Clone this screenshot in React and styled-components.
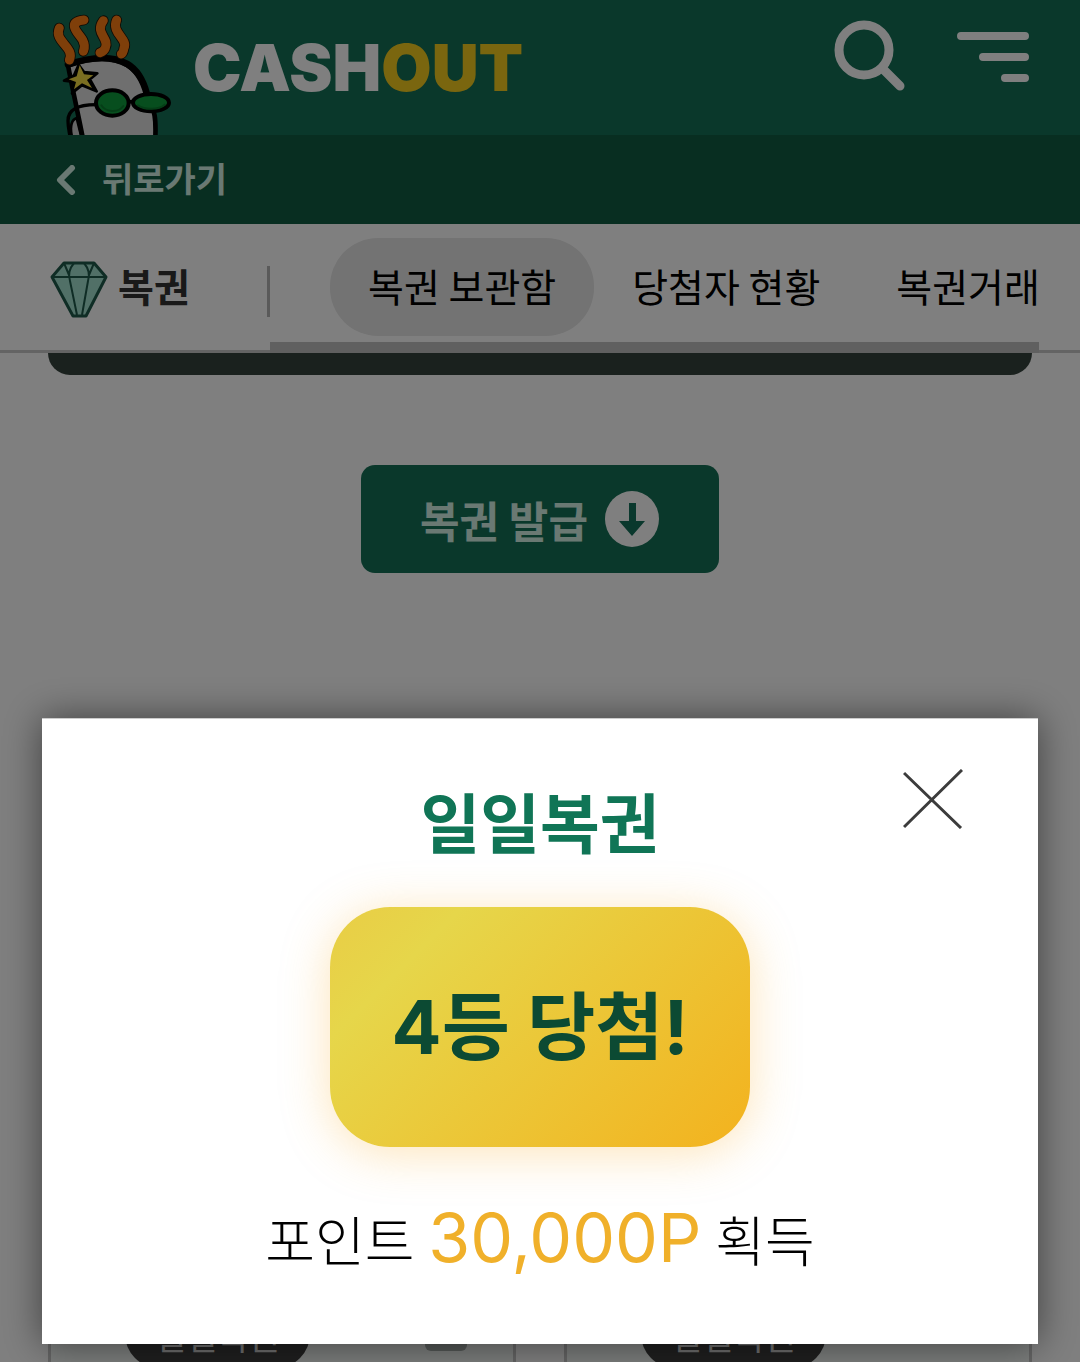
import React, { useState } from 'react';
import styled, { createGlobalStyle } from 'styled-components';

// Global Styles
const GlobalStyle = createGlobalStyle`
  :root {
    --green: #147056;
    --green-dark: #105c42;
    --mint: #d4f2e6;
    --gold: #f0b02a;
    --line: #c8c8c8;
  }
  * { box-sizing: border-box; }
  body {
    margin: 0;
    background: #fff;
    color: #000;
    font-family: "Noto Sans CJK KR", "Noto Sans", sans-serif;
  }
  button {
    font-family: inherit;
    border: 0;
    padding: 0;
    background: none;
    cursor: pointer;
  }
  a {
    color: inherit;
    text-decoration: none;
  }
  svg {
    display: block;
    flex-shrink: 0;
  }
`;

const Page = styled.div`
  height: 100vh;
  overflow: hidden;
`;

const Header = styled.header`
  display: flex;
  align-items: center;
  justify-content: space-between;
  height: 135px;
  padding: 0 51px 0 50px;
  background: var(--green);
`;

const HomeLink = styled.a`
  display: flex;
  align-items: center;
  gap: 21px;
  height: 100%;

  svg {
    align-self: flex-end;
  }
`;

const LogoText = styled.span`
  font-family: Inter, sans-serif;
  font-size: 65px;
  font-weight: 900;
  line-height: 64px;
  color: #fff;
`;

const LogoAccent = styled.span`
  color: #f5cc1e;
`;

const HeaderActions = styled.div`
  display: flex;
  align-items: center;
  gap: 52px;
  padding-bottom: 24px;
`;

const BackBar = styled.div`
  display: flex;
  align-items: center;
  height: 89px;
  padding: 0 56px;
  background: var(--green-dark);
`;

const BackLink = styled.a`
  display: flex;
  align-items: center;
  gap: 26px;
  font-size: 34px;
  font-weight: 700;
  line-height: 44px;
  color: var(--mint);
`;

const BarLabel = styled.span`
  padding-bottom: 4px;
`;

const SubNav = styled.nav`
  display: flex;
  align-items: stretch;
  height: 129px;
  padding-right: 41px;
  border-bottom: 3px solid var(--line);
`;

const Category = styled.div`
  display: flex;
  align-items: center;
  gap: 10px;
  width: 267px;
  flex-shrink: 0;
  padding-left: 50px;
  font-size: 39px;
  font-weight: 700;
  line-height: 52px;
  color: #333;
`;

const Divider = styled.div`
  align-self: center;
  width: 3px;
  height: 51px;
  margin-top: 8px;
  background: #b4b4b4;
`;

const TabArea = styled.div`
  flex: 1;
  min-width: 0;
  display: flex;
  flex-direction: column;
  justify-content: space-between;
  margin-bottom: -3px;
  padding-top: 14px;
`;

const Tabs = styled.div`
  display: flex;
  padding-left: 60px;
`;

const Tab = styled.a`
  flex-shrink: 0;
  padding: 0 38px 4px;
  border-radius: 48px;
  background: ${props => props.$active ? '#e6e6e6' : 'transparent'};
  font-size: 39px;
  line-height: 94px;
  white-space: nowrap;

  &:last-child {
    padding-right: 0;
  }
`;

const ScrollBar = styled.div`
  height: 11px;
  background: #c0c0c0;
`;

const Content = styled.main`
  display: flex;
  flex-direction: column;
  align-items: center;
  padding: 0 48px;
`;

const BannerEnd = styled.div`
  width: 100%;
  height: 22px;
  border-radius: 0 0 22px 22px;
  background: #34423c;
`;

const IssueButton = styled.button`
  display: flex;
  align-items: center;
  gap: 17px;
  height: 108px;
  margin: 90px 0;
  padding: 0 59px;
  border-radius: 14px;
  background: var(--green);
  color: var(--mint);
  font-size: 43px;
  font-weight: 700;
  line-height: 60px;
`;

const TicketGrid = styled.div`
  display: grid;
  grid-template-columns: 1fr 1fr;
  gap: 48px;
  width: 100%;
  margin-top: 580px;
`;

const TicketCard = styled.article`
  display: flex;
  align-items: flex-start;
  justify-content: space-between;
  height: 420px;
  padding: 54px 46px 0 74px;
  border: 3px solid var(--line);
  border-radius: 24px;
  background: #f6faf8;
`;

const TicketLabel = styled.span`
  padding: 4px 30px 0;
  border-radius: 36px;
  background: #3e3e3e;
  color: #d8d8d8;
  font-size: 34px;
  line-height: 64px;
`;

const TicketMark = styled.span`
  width: 42px;
  height: 51px;
  border-radius: 6px;
  background: #a8aeab;
`;

const Overlay = styled.div`
  position: fixed;
  inset: 0;
  display: flex;
  align-items: flex-end;
  padding: 0 42px 18px;
  background: rgba(0, 0, 0, 0.5);
`;

const Dialog = styled.section`
  position: relative;
  display: flex;
  flex-direction: column;
  align-items: center;
  width: 100%;
  padding: 60px 0 55px;
  border-top: 1px solid #ccc;
  background: #fff;
  box-shadow: 0 0 36px rgba(0, 0, 0, 0.5);
`;

const CloseButton = styled.button`
  position: absolute;
  top: 50px;
  right: 75px;
`;

const DialogTitle = styled.h2`
  margin: 0;
  font-size: 65px;
  font-weight: 600;
  line-height: 82px;
  color: #107556;
`;

const ResultBadge = styled.div`
  min-width: 420px;
  margin-top: 46px;
  padding: 66px 54px;
  border-radius: 60px;
  background: linear-gradient(135deg, #e9cd45 0%, #e6d64a 20%, #f3b21e 100%);
  box-shadow: 0 6px 48px rgba(250, 176, 50, 0.34);
  color: #0c4a33;
  font-family: Inter, "Noto Sans CJK KR", sans-serif;
  font-size: 74px;
  font-weight: 700;
  line-height: 108px;
  text-align: center;
  white-space: nowrap;
`;

const PointLine = styled.p`
  margin: 42px 0 0;
  font-size: 54px;
  font-weight: 300;
  line-height: 100px;
`;

const PointValue = styled.strong`
  margin: 0 2px;
  font-family: Inter, sans-serif;
  font-size: 68px;
  font-weight: 400;
  line-height: 80px;
  color: var(--gold);
`;

const Mascot = () => (
  <svg width="122" height="122" viewBox="30 39 366 366" fill="none" strokeLinecap="round" strokeLinejoin="round">
    <path d="M96 410C88 378 96 358 110 354L124 410Z" fill="#ccc" stroke="#000" strokeWidth="8" />
    <path d="M128 412C114 340 98 270 84 196C160 170 220 172 262 196C302 222 316 262 322 290C346 330 348 360 346 412Z" fill="#dedede" stroke="#000" strokeWidth="14" />
    <path d="M84 194C160 168 220 168 262 192C296 212 312 250 320 280" stroke="#000" strokeWidth="20" />
    <path d="M168 314C130 314 84 322 84 362C84 382 88 396 90 410" stroke="#000" strokeWidth="10" />
    <g stroke="#1a1208" strokeWidth="32">
      <path d="M58 84C40 124 106 142 88 180" />
      <path d="M132 60C76 66 116 100 128 120C138 140 132 148 130 154" />
      <path d="M190 62C162 100 210 114 196 144C192 154 186 156 180 158" />
      <path d="M230 60C212 98 266 118 252 144C250 156 248 160 244 162" />
    </g>
    <g stroke="#ff7e14" strokeWidth="27">
      <path d="M58 84C40 124 106 142 88 180" />
      <path d="M132 60C76 66 116 100 128 120C138 140 132 148 130 154" />
      <path d="M190 62C162 100 210 114 196 144C192 154 186 156 180 158" />
      <path d="M230 60C212 98 266 118 252 144C250 156 248 160 244 162" />
    </g>
    <path d="M72 242L102 226L116 194L132 216L172 220L150 238L170 274L126 256L96 280L104 246Z" fill="#000" stroke="#000" strokeWidth="8" />
    <path d="M86 238L110 229L119 196L132 223L160 226L141 240L156 264L126 250L102 268L108 246Z" fill="#f4dc42" />
    <path d="M264 306L282 304" stroke="#000" strokeWidth="11" />
    <ellipse cx="217" cy="309" rx="49" ry="38" fill="#0e9c3c" stroke="#000" strokeWidth="12" />
    <ellipse cx="333" cy="308" rx="54" ry="26" fill="#0e9c3c" stroke="#000" strokeWidth="12" />
    <path d="M184 316C196 336 234 340 250 318M294 316C314 330 356 330 374 314" stroke="#0a7c2e" strokeWidth="6" />
  </svg>
);

const SearchIcon = () => (
  <svg width="71" height="72" viewBox="0 0 71 72" fill="none" stroke="#fff" strokeWidth="9" strokeLinecap="round">
    <circle cx="30" cy="30" r="25" />
    <path d="M49 49L66 66" />
  </svg>
);

const MenuIcon = () => (
  <svg width="72" height="52" viewBox="0 0 72 52" fill="none" stroke="#fff" strokeWidth="8" strokeLinecap="round">
    <path d="M4 6H68M26 27H68M48 48H68" />
  </svg>
);

const BackIcon = () => (
  <svg width="20" height="30" viewBox="0 0 20 30" fill="none" stroke="currentColor" strokeWidth="6" strokeLinecap="round" strokeLinejoin="round">
    <path d="M16 3L4 15L16 27" />
  </svg>
);

const DiamondIcon = () => (
  <svg width="58" height="62" viewBox="0 -1 58 62" fill="none" stroke="#1f5a4b" strokeWidth="3" strokeLinejoin="round">
    <path d="M14 6H44L56 20L36 59H23L2 20Z" fill="#a2e0cf" />
    <path strokeWidth="2" d="M2 20H56M24 6C19 12 18 18 20 24L27 58M34 6C39 12 40 18 38 24L32 58M14 6L19 18M44 6L39 18" />
  </svg>
);

const DownIcon = () => (
  <svg width="55" height="56" viewBox="0 0 55 56">
    <ellipse cx="27" cy="28" rx="27" ry="28" fill="#fff" />
    <path d="M24 12H31V30H40L27 45L14 30H24Z" fill="#14705a" />
  </svg>
);

const CloseIcon = () => (
  <svg width="60" height="60" viewBox="0 0 60 60" fill="none" stroke="#3c3c3c" strokeWidth="3">
    <path d="M1 4L58 59M59 1L1 58" />
  </svg>
);

// Menu Items Configuration
const tabs = [
  { href: '#box', label: '복권 보관함', active: true },
  { href: '#winners', label: '당첨자 현황' },
  { href: '#trade', label: '복권거래' },
];

const tickets = [
  { id: 1, label: '일일복권', marked: true },
  { id: 2, label: '일일복권', marked: false },
];

const App = () => {
  const [isOpen, setIsOpen] = useState(true);

  return (
    <>
      <GlobalStyle />
      <Page>
        <Header>
          <HomeLink href="#home">
            <Mascot />
            <LogoText>CASH<LogoAccent>OUT</LogoAccent></LogoText>
          </HomeLink>
          <HeaderActions>
            <button type="button" aria-label="검색"><SearchIcon /></button>
            <button type="button" aria-label="메뉴"><MenuIcon /></button>
          </HeaderActions>
        </Header>

        <BackBar>
          <BackLink href="#back">
            <BackIcon />
            <BarLabel>뒤로가기</BarLabel>
          </BackLink>
        </BackBar>

        <SubNav>
          <Category>
            <DiamondIcon />
            <BarLabel>복권</BarLabel>
          </Category>
          <Divider />
          <TabArea>
            <Tabs>
              {tabs.map(tab => (
                <Tab key={tab.href} href={tab.href} $active={tab.active}>{tab.label}</Tab>
              ))}
            </Tabs>
            <ScrollBar />
          </TabArea>
        </SubNav>

        <Content>
          <BannerEnd />
          <IssueButton type="button">
            복권 발급
            <DownIcon />
          </IssueButton>
          <TicketGrid>
            {tickets.map(ticket => (
              <TicketCard key={ticket.id}>
                <TicketLabel>{ticket.label}</TicketLabel>
                {ticket.marked && <TicketMark />}
              </TicketCard>
            ))}
          </TicketGrid>
        </Content>
      </Page>

      {isOpen && (
        <Overlay>
          <Dialog role="dialog" aria-modal="true" aria-labelledby="result-title">
            <CloseButton type="button" aria-label="닫기" onClick={() => setIsOpen(false)}>
              <CloseIcon />
            </CloseButton>
            <DialogTitle id="result-title">일일복권</DialogTitle>
            <ResultBadge>4등 당첨!</ResultBadge>
            <PointLine>
              포인트 <PointValue>30,000P</PointValue> 획득
            </PointLine>
          </Dialog>
        </Overlay>
      )}
    </>
  );
};

export default App;
